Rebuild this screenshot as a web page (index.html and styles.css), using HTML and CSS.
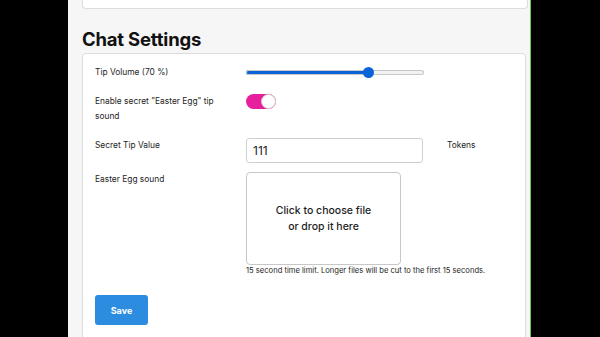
FILE: index.html
```html
<!DOCTYPE html>
<html lang="en">
<head>
    <meta charset="UTF-8">
    <meta name="viewport" content="width=device-width, initial-scale=1.0">
    <title>Chat Settings</title>
    <link rel="stylesheet" href="styles.css">
</head>
<body>
    <div class="page">
        <div class="card card-top"></div>

        <h2>Chat Settings</h2>

        <div class="card settings">
            <div class="row row-volume">
                <label for="volume">Tip Volume (70 %)</label>
                <div class="control">
                    <input type="range" id="volume" min="0" max="100" value="70">
                </div>
            </div>

            <div class="row row-toggle">
                <label>Enable secret "Easter Egg" tip sound</label>
                <div class="control">
                    <span class="toggle on"><span class="knob"></span></span>
                </div>
            </div>

            <div class="row row-tip">
                <label for="tip">Secret Tip Value</label>
                <div class="control">
                    <input type="text" id="tip" value="111">
                </div>
                <span class="unit">Tokens</span>
            </div>

            <div class="row row-sound">
                <label>Easter Egg sound</label>
                <div class="control">
                    <div class="dropzone">Click to choose file<br>or drop it here</div>
                    <div class="help">15 second time limit. Longer files will be cut to the first 15 seconds.</div>
                </div>
            </div>

            <button type="button">Save</button>
        </div>
    </div>
</body>
</html>
```

FILE: styles.css
```css
html, body {
    margin: 0;
    height: 100%;
    background-color: #000;
}
body {
    font-family: Inter, "Liberation Sans", sans-serif;
    color: #1e1e1e;
    overflow: hidden;
}
.page {
    margin-left: 68px;
    width: 448px;
    height: 337px;
    padding-left: 14px;
    background-color: #f6f6f6;
    border-right: 1px solid #5fc94a;
    overflow: hidden;
}
.card {
    width: 444px;
    background-color: #fff;
    border: 1px solid #dcdcdc;
    border-radius: 4px;
}
.card-top {
    height: 8px;
    border-top: none;
    border-radius: 0 0 4px 4px;
}
h2 {
    margin: 20px 0 3px;
    height: 21px;
    font-size: 18.5px;
    font-weight: 700;
    line-height: 21px;
    letter-spacing: -0.2px;
    color: #111;
}
.settings {
    height: 300px;
    padding: 11px 0 0 12px;
    box-sizing: border-box;
}
.row {
    display: flex;
    align-items: flex-start;
    font-size: 8.4px;
    line-height: 15px;
}
.row label {
    width: 151px;
    padding-right: 20px;
    box-sizing: border-box;
}
.row-volume {
    margin-bottom: 14px;
}
.row-toggle {
    margin-bottom: 14px;
}
.row-tip {
    margin-bottom: 9px;
}
input[type="range"] {
    -webkit-appearance: none;
    appearance: none;
    display: block;
    width: 178px;
    height: 15px;
    margin: 0;
    background: transparent;
}
input[type="range"]::-webkit-slider-runnable-track {
    height: 5px;
    border-radius: 3px;
    background: linear-gradient(to right, #0b63d8 70%, #f2f2f2 70%);
    box-shadow: inset 0 0 0 1px #c8c8c8;
}
input[type="range"]::-webkit-slider-thumb {
    -webkit-appearance: none;
    width: 11px;
    height: 11px;
    margin-top: -3px;
    border-radius: 50%;
    background-color: #0b63d8;
}
.toggle {
    position: relative;
    display: block;
    width: 30px;
    height: 15px;
    border-radius: 8px;
    background-color: #e71f9d;
}
.toggle .knob {
    position: absolute;
    top: 0;
    right: 0;
    width: 13px;
    height: 13px;
    border: 1px solid #cfcfcf;
    border-radius: 50%;
    background-color: #fff;
}
input[type="text"] {
    display: block;
    width: 177px;
    height: 25px;
    margin: 0;
    padding: 0 6px;
    border: 1px solid #cfcfcf;
    border-radius: 3px;
    box-sizing: border-box;
    font-family: inherit;
    font-size: 12px;
    color: #1e1e1e;
}
.unit {
    margin-left: 24px;
}
.dropzone {
    display: flex;
    align-items: center;
    justify-content: center;
    width: 155px;
    height: 93px;
    border: 1px solid #c8c8c8;
    border-radius: 4px;
    box-sizing: border-box;
    text-align: center;
    font-size: 10.5px;
    font-weight: 500;
    line-height: 16px;
}
.help {
    margin-top: 1px;
    font-size: 7.6px;
    line-height: 10px;
    white-space: nowrap;
}
button {
    display: block;
    margin-top: 19px;
    width: 53px;
    height: 30px;
    padding: 0;
    border: none;
    border-radius: 3px;
    background-color: #2b8ce0;
    color: #fff;
    font-family: inherit;
    font-size: 9px;
    font-weight: 700;
}
```
